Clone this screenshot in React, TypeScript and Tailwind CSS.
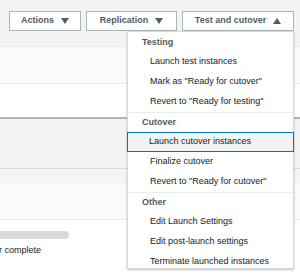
import React from "react";

const Down = () => (
  <svg width="8" height="6" viewBox="0 0 8 6" className="block">
    <path d="M0 0 L8 0 L4 6 Z" fill="#545b64" />
  </svg>
);
const Up = () => (
  <svg width="8" height="6" viewBox="0 0 8 6" className="block">
    <path d="M0 6 L8 6 L4 0 Z" fill="#545b64" />
  </svg>
);

const Header = ({ children }: { children: React.ReactNode }) => (
  <div className="h-[19px] flex items-center pl-[14px] font-bold text-[#545b64]">{children}</div>
);
const Item = ({ children }: { children: React.ReactNode }) => (
  <div className="h-[20px] flex items-center pl-[22px] text-[#16191f]">{children}</div>
);

export default function App() {
  return (
    <div
      className="relative w-[300px] h-[275px] overflow-hidden bg-white text-[9px]"
      style={{ fontFamily: '"Liberation Sans", Arial, sans-serif' }}
    >
      {/* top toolbar */}
      <div className="h-[47px] bg-[#f2f3f3] border-b border-[#eaeded] pt-[11px] pl-[9px] flex gap-[5px] items-start">
        <div className="w-[72px] h-[20px] bg-white border border-[#aab7b8] flex items-center justify-center gap-[7px] font-bold text-[#545b64]">
          <span>Actions</span>
          <Down />
        </div>
        <div className="w-[91px] h-[20px] bg-white border border-[#aab7b8] flex items-center justify-center gap-[7px] font-bold text-[#545b64]">
          <span>Replication</span>
          <Down />
        </div>
        <div className="w-[112px] h-[20px] bg-white border border-[#aab7b8] flex items-center justify-center gap-[7px] font-bold text-[#545b64]">
          <span>Test and cutover</span>
          <Up />
        </div>
      </div>
      <div className="h-[37px] bg-[#fafafa] border-b border-[#eaeded]" />
      <div className="h-[35px] bg-white border-b-2 border-[#aab7b8]" />
      <div className="h-[50px] bg-[#f2f3f3] border-b border-[#d5dbdb]" />
      <div className="h-[14px] bg-[#f3f4f4]" />
      <div className="h-[37px] bg-[#fafafa] border-b border-[#eaeded]" />
      <div className="pt-[11px]">
        <div className="w-[69px] h-[8px] rounded-r-full bg-[#d5dbdb]" />
        <div className="mt-[5px] text-[#16191f] text-[9px] -ml-[1px]">r complete</div>
      </div>

      {/* dropdown menu */}
      <div className="absolute left-[127px] top-[31px] w-[167px] h-[238px] bg-white border border-[#d5dbdb] shadow-[0_1px_2px_rgba(0,0,0,0.25)]">
        <div className="pt-[1px]">
          <Header>Testing</Header>
          <Item>Launch test instances</Item>
          <Item>Mark as "Ready for cutover"</Item>
          <Item>Revert to "Ready for testing"</Item>
        </div>
        <div className="border-t border-[#eaeded]">
          <Header>Cutover</Header>
          <div className="h-[20px] flex items-center pl-[21px] text-[#16191f] bg-[#f2f3f3] border border-[#0073bb] -mx-[1px]">
            Launch cutover instances
          </div>
          <Item>Finalize cutover</Item>
          <Item>Revert to "Ready for cutover"</Item>
        </div>
        <div className="border-t border-[#eaeded]">
          <Header>Other</Header>
          <Item>Edit Launch Settings</Item>
          <Item>Edit post-launch settings</Item>
          <Item>Terminate launched instances</Item>
        </div>
      </div>
    </div>
  );
}
